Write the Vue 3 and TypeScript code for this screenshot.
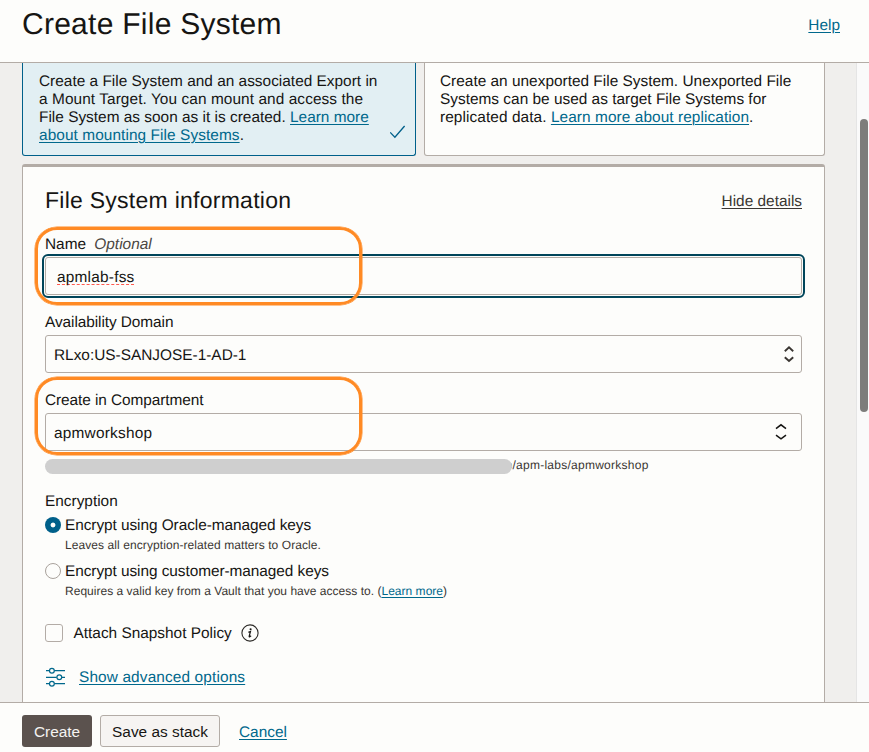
<script setup lang="ts">
import { ref } from 'vue'

const name = ref('apmlab-fss')
const keyType = ref<'oracle' | 'customer'>('oracle')
const attachPolicy = ref(false)
</script>

<template>
  <div class="page">
    <header class="header">
      <h1>Create File System</h1>
      <a class="link help">Help</a>
    </header>

    <div class="body">
      <main class="content">
        <div class="cards">
          <section class="card selected">
            <p>
              <span class="tight">Create a File System and an associated Export in</span><br />
              a Mount Target. You can mount and access the<br />
              <span class="tight">File System as soon as it is created. <a class="link">Learn more</a></span><br />
              <a class="link">about mounting File Systems</a>.
            </p>
            <svg class="check" width="16" height="14" viewBox="0 0 16 14">
              <path d="M.2 7.4 4.9 12.2 14.6 1" fill="none" stroke="#00608a" stroke-width="1.3" />
            </svg>
          </section>
          <section class="card">
            <p>
              <span class="tight">Create an unexported File System. Unexported File</span><br />
              <span class="tight">Systems can be used as target File Systems for</span><br />
              replicated data. <a class="link">Learn more about replication</a>.
            </p>
          </section>
        </div>

        <section class="panel">
          <div class="panel-head">
            <h2>File System information</h2>
            <a class="hide">Hide details</a>
          </div>

          <div class="field">
            <span class="label">Name <em>Optional</em></span>
            <div class="control focused"><span class="misspelt">{{ name }}</span></div>
            <span class="marker"></span>
          </div>

          <div class="field">
            <span class="label snug">Availability Domain</span>
            <div class="control select">
              <span>RLxo:US-SANJOSE-1-AD-1</span>
              <svg width="12" height="18" viewBox="0 0 12 18">
                <path d="M1.8 6.2 6 2.4l4.2 3.8M1.8 12.2l4.2 3.8 4.2-3.8" fill="none" stroke="#3a3632" stroke-width="1.9" />
              </svg>
            </div>
          </div>

          <div class="field">
            <span class="label snug">Create in Compartment</span>
            <div class="control select wide">
              <span class="loose">apmworkshop</span>
              <svg width="12" height="18" viewBox="0 0 12 18">
                <path d="M1 5.6 6 1.8l5 3.8M1 12.2l5 3.6 5-3.6" fill="none" stroke="#161513" stroke-width="1.5" />
              </svg>
            </div>
            <span class="marker raised"></span>
          </div>

          <div class="path"><span class="trail">o/apm-labs/apmworkshop</span><span class="redacted"></span></div>

          <div class="encryption">
            <span class="label">Encryption</span>
            <div class="option" @click="keyType = 'oracle'">
              <span class="radio" :class="{ on: keyType === 'oracle' }"></span>
              <div>
                <span class="option-title">Encrypt using Oracle-managed keys</span>
                <span class="hint first">Leaves all encryption-related matters to Oracle.</span>
              </div>
            </div>
            <div class="option" @click="keyType = 'customer'">
              <span class="radio" :class="{ on: keyType === 'customer' }"></span>
              <div>
                <span class="option-title">Encrypt using customer-managed keys</span>
                <span class="hint">Requires a valid key from a Vault that you have access to. (<a class="link">Learn more</a>)</span>
              </div>
            </div>
          </div>

          <div class="policy" @click="attachPolicy = !attachPolicy">
            <span class="box"></span>
            <span class="policy-text">Attach Snapshot Policy</span>
            <svg width="18" height="18" viewBox="0 0 18 18">
              <circle cx="9" cy="9" r="8.1" fill="none" stroke="#2b2926" stroke-width="1.1" />
              <circle cx="9.6" cy="5.2" r="1.05" fill="#161513" />
              <path d="M7.3 8.3 9.5 7.5 8.2 12.2q-.2 1 .6.6l1.3-1" fill="none" stroke="#161513" stroke-width="1.2" />
            </svg>
          </div>

          <div class="advanced">
            <svg width="21" height="20" viewBox="0 0 21 20" fill="none" stroke="#00688c" stroke-width="1.2">
              <path d="M1 3.7h3.4M9.4 3.7H20M1 10.3h10.7M16.7 10.3H20M1 16.7h3.4M9.4 16.7H20" />
              <circle cx="6.9" cy="3.7" r="2.4" />
              <circle cx="14.3" cy="10.3" r="2.4" />
              <circle cx="6.9" cy="16.7" r="2.4" />
            </svg>
            <a class="link">Show advanced options</a>
          </div>
        </section>
      </main>
      <div class="track"><div class="thumb"></div></div>
    </div>

    <footer class="footer">
      <button class="primary">Create</button>
      <button class="secondary">Save as stack</button>
      <a class="link">Cancel</a>
    </footer>
  </div>
</template>

<style>
body {
  margin: 0;
}
</style>

<style scoped>
.page {
  display: flex;
  flex-direction: column;
  width: 869px;
  height: 752px;
  overflow: hidden;
  box-sizing: border-box;
  background: #fdfdfb;
  color: #161513;
  font: 15.4px/18px "Liberation Sans", Arial, sans-serif;
  text-rendering: geometricPrecision;
}
.page * {
  box-sizing: border-box;
}
h1,
h2,
p {
  margin: 0;
  font-weight: 400;
}
.link {
  color: #00688c;
  text-decoration: underline;
  text-underline-offset: 1.5px;
  text-decoration-thickness: 1px;
  cursor: pointer;
}
.header {
  display: flex;
  justify-content: space-between;
  height: 63px;
  flex: none;
  padding: 7px 29px 0 22px;
  border-bottom: 1px solid #b3aca6;
}
h1 {
  font-size: 30px;
  line-height: 36px;
  letter-spacing: 0.26px;
}
.help {
  margin-top: 10px;
}
.body {
  display: flex;
  flex: 1;
  min-height: 0;
  background: #f0efed;
}
.content {
  width: 856px;
  padding: 0 31px 0 22px;
  overflow: hidden;
}
.track {
  width: 13px;
  padding: 56px 1px 0 3px;
  background: #fafafa;
  border-left: 1px solid #e5e5e5;
}
.thumb {
  width: 8px;
  height: 293px;
  border-radius: 4px;
  background: #7d7d7b;
}
.cards {
  display: flex;
  gap: 8px;
}
.card {
  position: relative;
  width: 401px;
  height: 93px;
  padding: 10px 0 0 15px;
  border: 1px solid #b3aca6;
  border-top: 0;
  border-radius: 0 0 3px 3px;
  background: #fdfdfb;
  white-space: nowrap;
  letter-spacing: 0.08px;
}
.tight {
  letter-spacing: 0.01px;
}
.card.selected {
  width: 394px;
  padding-left: 16px;
  background: #e2eff3;
  border-color: #00608a;
}
.check {
  position: absolute;
  right: 9px;
  bottom: 16px;
}
.panel {
  height: 600px;
  margin-top: 8px;
  padding: 20px 22px 0;
  border: 1px solid #b3aca6;
  border-top-width: 3px;
  border-radius: 3px 3px 0 0;
  background: #fdfdfb;
}
.panel-head {
  display: flex;
  justify-content: space-between;
  height: 48px;
}
h2 {
  font-size: 23px;
  line-height: 27px;
  letter-spacing: 0.26px;
}
.hide {
  margin-top: 6px;
  color: #3a3632;
  text-decoration: underline;
  text-underline-offset: 1.5px;
  text-decoration-thickness: 1px;
}
.field {
  position: relative;
  height: 78px;
}
.label {
  display: block;
  height: 22px;
  padding-top: 1px;
}
.label.snug {
  letter-spacing: -0.07px;
}
em {
  margin-left: 4px;
  color: #4a4642;
}
.control {
  display: flex;
  align-items: center;
  height: 38px;
  padding-left: 8px;
  border: 1px solid #b3aca6;
  border-radius: 3px;
}
.control > span {
  margin-top: 4px;
}
.focused {
  padding-left: 11px;
  outline: 2px solid #00455a;
  outline-offset: 1px;
}
.control > .misspelt {
  height: 16px;
  margin-top: 2px;
  border-bottom: 1px dashed #ff5a4f;
  letter-spacing: 0.22px;
}
.loose {
  letter-spacing: 0.22px;
}
.select {
  justify-content: space-between;
  padding-right: 6px;
}
.select.wide {
  padding-right: 14px;
}
.marker {
  position: absolute;
  left: -10px;
  top: -8px;
  width: 327px;
  height: 78px;
  border: 3px solid #ff8a24;
  border-radius: 22px;
  box-shadow: 0 0 0 0.5px #ff8a24;
}
.marker.raised {
  top: -14px;
}
.path {
  position: relative;
  height: 16px;
  margin-top: -11px;
  padding-left: 460.5px;
  font-size: 12px;
  line-height: 14px;
  color: #3a3632;
  letter-spacing: 0.26px;
}
.redacted {
  position: absolute;
  left: 0;
  top: 1px;
  width: 467px;
  height: 15px;
  border-radius: 8px;
  background: #cfcfcf;
}
.encryption {
  margin-top: 18px;
}
.option {
  display: flex;
  height: 46px;
  gap: 4px;
  margin-top: 2px;
}
.option + .option {
  margin-top: 0;
}
.radio {
  width: 16px;
  height: 16px;
  margin-top: 1px;
  border: 1px solid #a9a29c;
  border-radius: 50%;
}
.radio.on {
  border: 0;
  background: radial-gradient(circle, #fdfdfb 2px, #00608a 2.8px);
}
.option-title {
  display: block;
  padding-top: 1px;
  letter-spacing: -0.06px;
}
.hint {
  display: block;
  margin-top: 3px;
  font-size: 12px;
  line-height: 14px;
  color: #3a3632;
  letter-spacing: 0.02px;
}
.hint.first {
  letter-spacing: 0.08px;
}
.policy {
  display: flex;
  align-items: center;
  height: 20px;
  margin-top: 15px;
}
.policy-text {
  padding-top: 2px;
}
.box {
  width: 18px;
  height: 18px;
  margin-right: 10.5px;
  border: 1px solid #b3aca6;
  border-radius: 3px;
}
.policy svg {
  margin-left: 9px;
}
.advanced {
  display: flex;
  align-items: center;
  gap: 13px;
  height: 20px;
  margin-top: 24px;
  letter-spacing: 0.13px;
}
.advanced .link {
  padding-top: 2px;
}
.footer {
  display: flex;
  height: 50px;
  flex: none;
  padding: 12px 0 0 22px;
  border-top: 1px solid #b3aca6;
}
button {
  height: 32px;
  padding: 1px 0 0;
  border-radius: 3px;
  font: inherit;
  letter-spacing: inherit;
}
.primary {
  width: 70px;
  border: 0;
  background: #5b524e;
  color: #f5f3f1;
}
.secondary {
  width: 120px;
  margin: 0 19px 0 8px;
  border: 1px solid #b3aca6;
  background: #f6f4f2;
  color: #161513;
}
.footer .link {
  line-height: 36px;
}
</style>
